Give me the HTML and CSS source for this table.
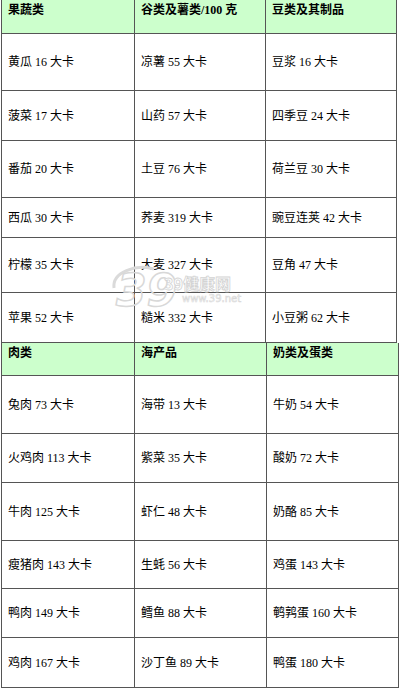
FILE: index.html
```html
<!DOCTYPE html>
<html lang="zh">
<head>
<meta charset="utf-8">
<title>食物热量表</title>
<link rel="stylesheet" href="styles.css">
</head>
<body>
<div class="sheet">
  <div class="tbl t1">
    <div class="row head h34"><div class="cell">果蔬类</div><div class="cell">谷类及薯类/100 克</div><div class="cell">豆类及其制品</div></div>
    <div class="row h57"><div class="cell">黄瓜 16 大卡</div><div class="cell">凉薯 55 大卡</div><div class="cell">豆浆 16 大卡</div></div>
    <div class="row h50"><div class="cell">菠菜 17 大卡</div><div class="cell">山药 57 大卡</div><div class="cell">四季豆 24 大卡</div></div>
    <div class="row h57"><div class="cell">番茄 20 大卡</div><div class="cell">土豆 76 大卡</div><div class="cell">荷兰豆 30 大卡</div></div>
    <div class="row h40"><div class="cell">西瓜 30 大卡</div><div class="cell">荞麦 319 大卡</div><div class="cell">豌豆连荚 42 大卡</div></div>
    <div class="row h55"><div class="cell">柠檬 35 大卡</div><div class="cell">大麦 327 大卡</div><div class="cell">豆角 47 大卡</div></div>
    <div class="row h50"><div class="cell">苹果 52 大卡</div><div class="cell">糙米 332 大卡</div><div class="cell">小豆粥 62 大卡</div></div>
  </div>
  <div class="tbl t2">
    <div class="row head h33"><div class="cell">肉类</div><div class="cell">海产品</div><div class="cell">奶类及蛋类</div></div>
    <div class="row h58"><div class="cell">兔肉 73 大卡</div><div class="cell">海带 13 大卡</div><div class="cell">牛奶 54 大卡</div></div>
    <div class="row h49"><div class="cell">火鸡肉 113 大卡</div><div class="cell">紫菜 35 大卡</div><div class="cell">酸奶 72 大卡</div></div>
    <div class="row h58"><div class="cell">牛肉 125 大卡</div><div class="cell">虾仁 48 大卡</div><div class="cell">奶酪 85 大卡</div></div>
    <div class="row h48"><div class="cell">瘦猪肉 143 大卡</div><div class="cell">生蚝 56 大卡</div><div class="cell">鸡蛋 143 大卡</div></div>
    <div class="row h49"><div class="cell">鸭肉 149 大卡</div><div class="cell">鳕鱼 88 大卡</div><div class="cell">鹌鹑蛋 160 大卡</div></div>
    <div class="row h50"><div class="cell">鸡肉 167 大卡</div><div class="cell">沙丁鱼 89 大卡</div><div class="cell">鸭蛋 180 大卡</div></div>
  </div>
  <div class="watermark" aria-hidden="true">
    <svg class="wm-svg" width="140" height="50" viewBox="0 0 140 50">
      <path d="M8 24 C 6 8, 30 0, 48 5" fill="none" stroke="#dadada" stroke-width="3"/>
      <text x="10" y="42" class="wm-big">39</text>
      <text x="58" y="26" class="wm-name">39健康网</text>
      <text x="76" y="38" class="wm-url">www.39.net</text>
    </svg>
  </div>
</div>
</body>
</html>
```
FILE: styles.css
```css
html, body {
  margin: 0;
  padding: 0;
  background: #ffffff;
}
body {
  font-family: "Liberation Serif", "Noto Sans CJK SC", serif;
  font-size: 12px;
  color: #000;
}
.sheet {
  position: relative;
  width: 400px;
  height: 688px;
  overflow: hidden;
}
.tbl {
  margin-left: 1px;
  border-left: 1px solid #555;
  box-sizing: border-box;
}
.t1 { width: 396px; }
.t2 { width: 398px; }
.row {
  display: grid;
  box-sizing: border-box;
  border-bottom: 1px solid #555;
}
.t1 .row { grid-template-columns: 133px 131px 131px; }
.t2 .row { grid-template-columns: 133px 132px 132px; }
.cell {
  box-sizing: border-box;
  border-right: 1px solid #555;
  padding-left: 6px;
  display: flex;
  align-items: center;
  white-space: nowrap;
  line-height: 14px;
}
.head {
  background: #ccffcc;
}
.head .cell {
  align-items: flex-start;
  padding-top: 3px;
  font-weight: bold;
}
.h33 { height: 33px; }
.h34 { height: 34px; }
.h40 { height: 40px; }
.h48 { height: 48px; }
.h49 { height: 49px; }
.h50 { height: 50px; }
.h55 { height: 55px; }
.h57 { height: 57px; }
.h58 { height: 58px; }
.watermark {
  position: absolute;
  left: 106px;
  top: 264px;
  pointer-events: none;
}
.wm-svg {
  display: block;
  overflow: visible;
}
.wm-big {
  font-family: "DejaVu Sans", sans-serif;
  font-size: 44px;
  font-weight: bold;
  font-style: italic;
  fill: none;
  stroke: #d8d8d8;
  stroke-width: 1.5;
}
.wm-name {
  font-family: "Noto Sans CJK SC", sans-serif;
  font-size: 16px;
  font-weight: bold;
  fill: #ffffff;
  stroke: #d4d4d4;
  stroke-width: 0.8;
}
.wm-url {
  font-family: "DejaVu Sans", sans-serif;
  font-size: 10px;
  fill: #ffffff;
  stroke: #d8d8d8;
  stroke-width: 0.6;
}
```
